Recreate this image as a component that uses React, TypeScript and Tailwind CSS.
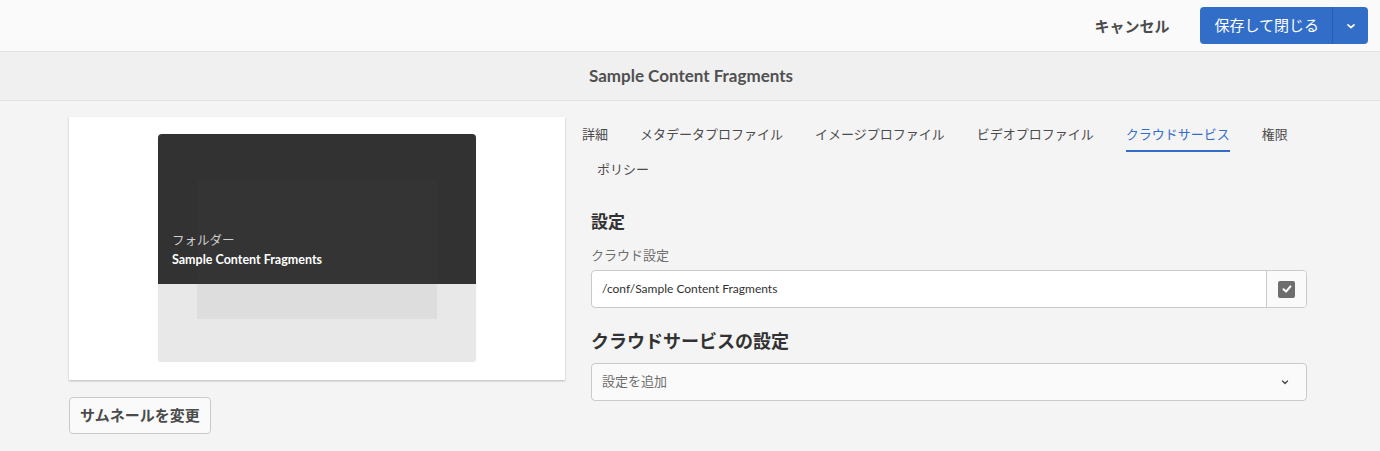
import React from "react";

const tabsRow1 = ["詳細", "メタデータプロファイル", "イメージプロファイル", "ビデオプロファイル", "クラウドサービス", "権限"];

export default function App() {
  return (
    <div
      className="w-[1380px] h-[451px] bg-[#f4f4f4] overflow-hidden text-[#4b4b4b]"
      style={{ fontFamily: "Lato, 'Noto Sans CJK JP', sans-serif" }}
    >
      {/* Top bar */}
      <div className="h-[52px] bg-[#fafafa] border-b border-[#e1e1e1] flex items-center justify-end pr-[12px]">
        <button className="text-[15px] font-bold text-[#4b4b4b] mr-[31px] mt-[1px]">キャンセル</button>
        <div className="flex h-[37px] rounded-[4px] bg-[#326ec8] text-white">
          <div className="flex items-center pl-[14px] pr-[13px] text-[15px]">保存して閉じる</div>
          <div className="w-px bg-[#2a5fae]" />
          <div className="flex items-center justify-center w-[35px]">
            <svg width="12" height="12" viewBox="0 0 12 12">
              <path d="M3 4.8 L6 7.6 L9 4.8" stroke="white" strokeWidth="1.7" fill="none" strokeLinecap="round" strokeLinejoin="round" />
            </svg>
          </div>
        </div>
      </div>

      {/* Title bar */}
      <div className="h-[49px] bg-[#f0f0f0] border-b border-[#e1e1e1] flex items-center justify-center">
        <div className="text-[17px] font-bold text-[#505050] ml-[2px]">Sample Content Fragments</div>
      </div>

      {/* Main */}
      <div className="flex pl-[69px] pt-[16px] gap-[26px]">
        {/* Left column */}
        <div className="w-[496px] flex flex-col">
          <div className="h-[263px] bg-white shadow-[0_1px_2px_rgba(0,0,0,0.25)] flex justify-center pt-[17px]">
            <div className="w-[318px] h-[228px] rounded-[4px] overflow-hidden bg-[#e8e8e8] shadow-[0_0_1px_rgba(0,0,0,0.15)] flex flex-col">
              <div className="h-[150px] bg-[#323232] relative flex flex-col justify-end pl-[14px] pb-[16px]">
                <div className="absolute left-[39px] top-[46px] w-[240px] h-[104px] bg-[#343434]" />
                <div className="relative text-[12.5px] text-[#cfcfcf] leading-[16px]">フォルダー</div>
                <div className="relative text-[12.5px] font-bold text-white leading-[16px] mt-[3px]">Sample Content Fragments</div>
              </div>
              <div className="ml-[39px] w-[240px] h-[35px] bg-[#dddddd]" />
            </div>
          </div>
          <div className="mt-[17px]">
            <button className="h-[37px] px-[10px] rounded-[4px] border border-[#cacaca] bg-[#fafafa] text-[15px] font-bold text-[#4b4b4b]">
              サムネールを変更
            </button>
          </div>
        </div>

        {/* Right column */}
        <div className="w-[716px] flex flex-col">
          <div className="flex ml-[-9px] mt-[0px]">
            {tabsRow1.map((t, i) => (
              <div
                key={t}
                className={`h-[35px] flex items-center text-[13px] relative ${i > 0 ? "ml-[32px]" : ""} ${
                  t === "クラウドサービス" ? "text-[#326ec8]" : "text-[#4b4b4b]"
                }`}
              >
                {t}
                {t === "クラウドサービス" && (
                  <div className="absolute left-0 right-0 bottom-0 h-[2px] bg-[#326ec8]" />
                )}
              </div>
            ))}
          </div>
          <div className="flex ml-[6px]">
            <div className="h-[35px] flex items-center text-[13px] text-[#4b4b4b]">ポリシー</div>
          </div>

          <div className="mt-[24px] text-[17px] font-bold text-[#323232] leading-[22px]">設定</div>
          <div className="mt-[13px] text-[13px] text-[#6e6e6e] leading-[18px]">クラウド設定</div>
          <div className="mt-[6px] h-[38px] flex rounded-[4px] border border-[#cacaca] bg-white overflow-hidden">
            <div className="flex-1 flex items-center pl-[10px] text-[12px] text-[#323232]">/conf/Sample Content Fragments</div>
            <div className="w-[40px] border-l border-[#cacaca] bg-[#fafafa] flex items-center justify-center">
              <div className="w-[17px] h-[17px] rounded-[2px] bg-[#6e6e6e] flex items-center justify-center">
                <svg width="12" height="12" viewBox="0 0 12 12">
                  <path d="M2.5 6.3 L5 8.6 L9.5 3.4" stroke="white" strokeWidth="2" fill="none" strokeLinecap="round" strokeLinejoin="round" />
                </svg>
              </div>
            </div>
          </div>

          <div className="mt-[21px] text-[18px] font-bold text-[#323232] leading-[24px]">クラウドサービスの設定</div>
          <div className="mt-[10px] h-[38px] flex items-center justify-between rounded-[4px] border border-[#cacaca] bg-[#fafafa] pl-[10px] pr-[16px]">
            <span className="text-[13px] text-[#6e6e6e]">設定を追加</span>
            <svg width="10" height="10" viewBox="0 0 10 10">
              <path d="M2.5 4 L5 6.5 L7.5 4" stroke="#4b4b4b" strokeWidth="1.4" fill="none" strokeLinecap="round" strokeLinejoin="round" />
            </svg>
          </div>
        </div>
      </div>
    </div>
  );
}
